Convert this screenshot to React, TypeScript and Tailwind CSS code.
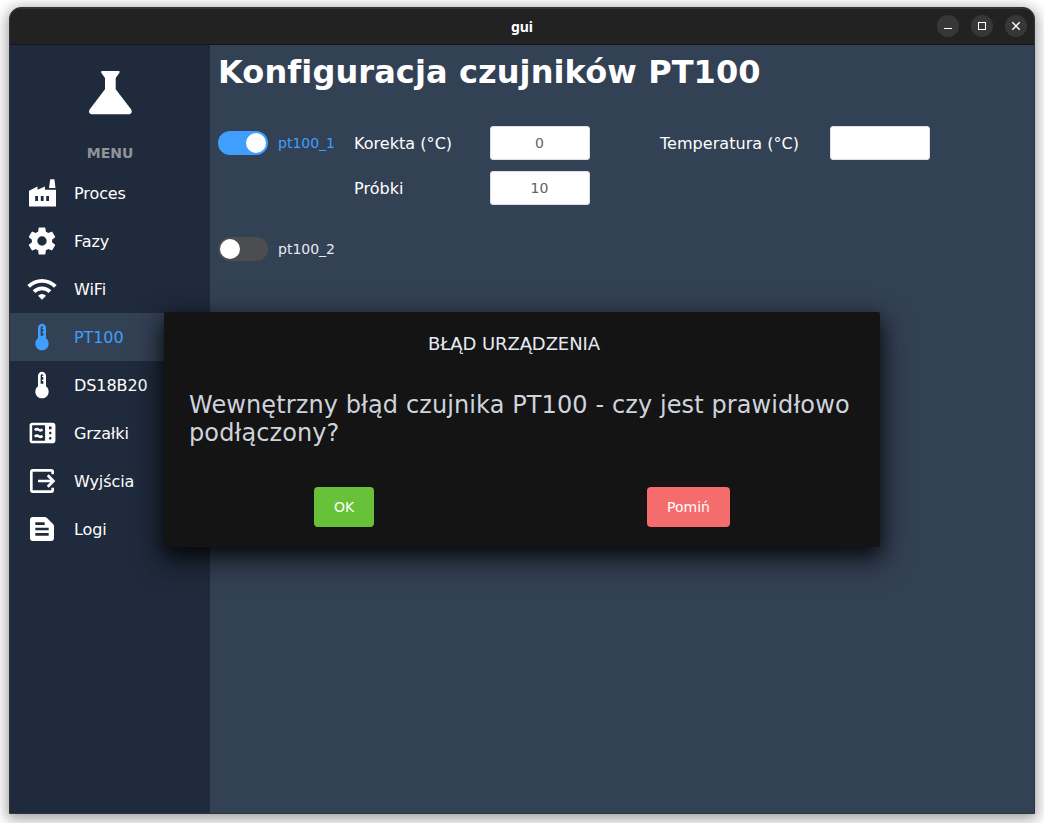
import type { ReactNode } from "react";
import { IoSettingsSharp } from "react-icons/io5";
import { MdWifi, MdDeviceThermostat, MdMicrowave, MdOutput, MdTextSnippet } from "react-icons/md";

function FactoryIcon() {
  return (
    <svg width="32" height="32" viewBox="0 0 32 32" fill="currentColor">
      <path d="M24.200 2.200h4.200l1.100 8.900h-6.500z" />
      <path
        fillRule="evenodd"
        d="M3 13.700 11.500 9.600v3.200L18.900 9.600v3.200H30V29.600H3zM9.200 19v4.900h2.800V19zm5.600 0v4.900h2.800V19zm5.400 0v4.900H23V19z"
      />
    </svg>
  );
}

function FlaskIcon() {
  return (
    <svg width="48" height="48" viewBox="0 0 48 48" fill="currentColor">
      <path d="M16 2h16.800q1.400.300.700 1.800L29.700 9v11.300L45.200 40.500q1.800 3.700-1.700 4.700H5.300q-3.500-1-1.700-4.700L19 20.300V9l-3.800-5.200Q14.600 2.300 16 2z" />
    </svg>
  );
}

type Item = { label: string; icon: ReactNode; active?: boolean };

const items: Item[] = [
  { label: "Proces", icon: <FactoryIcon /> },
  { label: "Fazy", icon: <IoSettingsSharp size={30} /> },
  { label: "WiFi", icon: <MdWifi size={32} /> },
  { label: "PT100", icon: <MdDeviceThermostat size={32} />, active: true },
  { label: "DS18B20", icon: <MdDeviceThermostat size={32} /> },
  { label: "Grzałki", icon: <MdMicrowave size={32} className="ml-px" /> },
  { label: "Wyjścia", icon: <MdOutput size={32} /> },
  { label: "Logi", icon: <MdTextSnippet size={32} /> },
];

function TitleBar() {
  return (
    <header className="grid h-[37px] shrink-0 grid-cols-[1fr_auto_1fr] items-center rounded-t-[11px] border-b border-[#161616] bg-[#222222] shadow-[inset_0_1px_0_#363636]">
      <span />
      <h2 className="pt-px font-['Noto_Sans','Open_Sans',sans-serif] text-[14px] font-bold leading-5 text-white">gui</h2>
      <div className="flex justify-end gap-3 pr-[7px]">
        {["min", "max", "close"].map((kind) => (
          <button key={kind} className="size-[22px] rounded-full bg-[#373737] text-white">
            <svg width="22" height="22" viewBox="0 0 22 22" fill="none" stroke="currentColor">
              {kind === "min" && <path d="M7 13.500h8" />}
              {kind === "max" && <rect x="7.500" y="7.500" width="7" height="7" />}
              {kind === "close" && <path d="m7.300 7.300 7.400 7.400m0-7.400-7.400 7.400" strokeWidth="1.300" />}
            </svg>
          </button>
        ))}
      </div>
    </header>
  );
}

function Sidebar() {
  return (
    <aside className="w-[200px] shrink-0 bg-[#1f2a3c] text-white">
      <div className="flex justify-center pt-6">
        <FlaskIcon />
      </div>
      <p className="mt-[26px] text-center text-[14px] font-bold leading-5 text-[#909399]">MENU</p>
      <nav className="mt-[6px]">
        {items.map((item) => (
          <a
            key={item.label}
            className={
              item.active
                ? "flex h-12 items-center gap-4 bg-[#334155] pl-4 text-[#409eff]"
                : "flex h-12 items-center gap-4 pl-4"
            }
          >
            <span className="flex size-8 items-center justify-center">{item.icon}</span>
            <span className="pt-[2px] text-base tracking-[-0.08px]">{item.label}</span>
          </a>
        ))}
      </nav>
    </aside>
  );
}

function Toggle({ on, label }: { on?: boolean; label: string }) {
  return (
    <div className="flex h-[34px] w-[136px] items-center gap-[10px]">
      <span
        className={
          on
            ? "flex h-6 w-[50px] items-center justify-end rounded-full bg-[#409eff] px-[2px]"
            : "flex h-6 w-[50px] items-center rounded-full bg-[#4c4d4f] px-[2px]"
        }
      >
        <span className="size-5 rounded-full bg-white" />
      </span>
      <span className={on ? "text-[14px] text-[#409eff]" : "text-[14px] text-[#e5eaf3]"}>{label}</span>
    </div>
  );
}

function Label({ children }: { children: string }) {
  return <span className="pt-[2px] tracking-[0.040px]">{children}</span>;
}

function Field({ value }: { value: string }) {
  return (
    <div className="flex h-[34px] w-[100px] items-center justify-center rounded-[4px] bg-white pr-px text-[14px] text-[#606266] shadow-[inset_0_0_0_1px_#dcdfe6]">
      {value}
    </div>
  );
}

function Dialog() {
  return (
    <section className="absolute left-[154px] top-[267px] h-[235px] w-[716px] rounded-[2px] bg-[#141414] shadow-[0_12px_32px_4px_rgba(0,0,0,0.36),0_8px_20px_rgba(0,0,0,0.72)]">
      <h3 className="pr-4 pt-5 text-center text-[18px] leading-6 tracking-[-0.1px] text-[#e5eaf3]">BŁĄD URZĄDZENIA</h3>
      <p className="mt-[35px] whitespace-nowrap pl-[25px] text-2xl leading-7 tracking-[0.105px] text-[#cfd3dc]">
        Wewnętrzny błąd czujnika PT100 - czy jest prawidłowo
        <br />
        podłączony?
      </p>
      <div className="mt-10 flex justify-between pl-[150px] pr-[150px] text-[14px] text-white">
        <button className="h-10 w-[60px] rounded-[4px] bg-[#67c23a]">OK</button>
        <button className="h-10 w-[83px] rounded-[4px] bg-[#f56c6c]">Pomiń</button>
      </div>
    </section>
  );
}

export default function App() {
  return (
    <div className="h-[823px] w-[1044px] overflow-hidden bg-white pl-[9px] pt-[7px] font-['DejaVu_Sans',sans-serif]">
      <div className="flex h-[807px] w-[1026px] flex-col rounded-t-[12px] border border-[#30343a] bg-[#222222] shadow-[0_3px_14px_2px_rgba(0,0,0,0.38)]">
        <TitleBar />
        <div className="relative flex min-h-0 flex-1">
          <Sidebar />
          <main className="flex-1 bg-[#334155] pl-2 text-white">
            <h1 className="pt-[7px] text-[32px] font-bold leading-10 tracking-[0.1px]">Konfiguracja czujników PT100</h1>
            <div className="mt-[34px] grid grid-cols-[136px_136px_170px_170px_100px] items-center gap-y-[11px]">
              <Toggle on label="pt100_1" />
              <Label>Korekta (°C)</Label>
              <Field value="0" />
              <Label>Temperatura (°C)</Label>
              <Field value="" />
              <span />
              <Label>Próbki</Label>
              <Field value="10" />
            </div>
            <div className="mt-[27px]">
              <Toggle label="pt100_2" />
            </div>
          </main>
          <Dialog />
        </div>
      </div>
    </div>
  );
}
